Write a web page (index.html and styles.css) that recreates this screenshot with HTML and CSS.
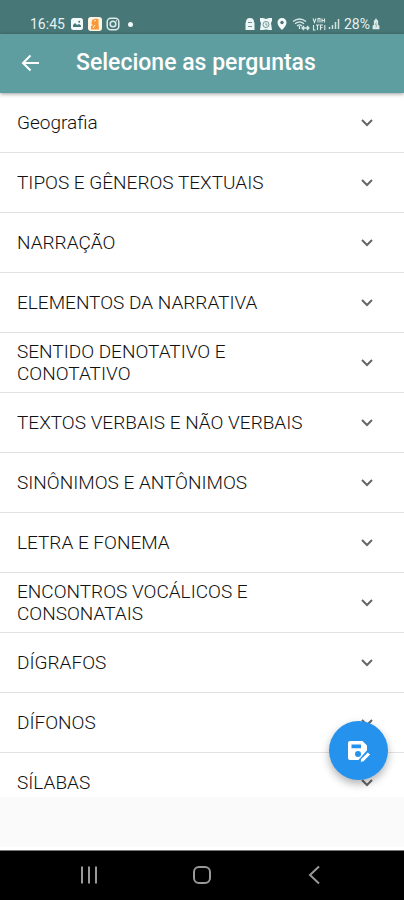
FILE: index.html
```html
<!DOCTYPE html>
<html lang="pt-BR">
<head>
<meta charset="utf-8">
<meta name="viewport" content="width=device-width, initial-scale=1">
<title>Selecione as perguntas</title>
<link rel="stylesheet" href="styles.css">
</head>
<body>
<div class="screen">
  <div class="status">
    <div class="status-group">
      <span class="clock">16:45</span>
      <svg class="glyph" viewBox="0 0 14 14"><rect x="1" y="1" width="12" height="12" rx="2.5" fill="#f2fafa"/><path d="M3 10V8l2-2 2 2 2-1 2 1.500V10z" fill="#477776"/><circle cx="9.200" cy="4.700" r="1" fill="#477776"/></svg>
      <svg class="glyph" viewBox="0 0 14 14"><rect width="14" height="14" rx="3" fill="#fff4e6"/><path d="M4 3l4-1.500 2.500 1V7l.5 5.500H3V9l2-1-1.500-1z" fill="#f79a35"/><path d="M6 4l2-.5M5 11l2-3" stroke="#fff4e6" fill="none"/></svg>
      <svg class="glyph" viewBox="0 0 14 14" fill="none" stroke="#dcebea" stroke-width="1.500"><rect x="1.200" y="1.200" width="11.600" height="11.600" rx="3.500"/><circle cx="7" cy="7" r="2.800"/><path d="M10 3.700h.8"/></svg>
      <span class="dot"></span>
    </div>
    <div class="status-group status-right">
      <svg class="glyph-small" viewBox="0 0 12 14"><path d="M2 5a4 4 0 0 1 8 0l.5 1v7h-9V6z" fill="#eef7f7"/><path d="M4 5.500h4M4 9.500h4" stroke="#6b9493"/></svg>
      <svg class="glyph-small" viewBox="0 0 12 14"><path d="M0 1h3l3 1 3-1h3v3l-1 2 1 7H9l-3-.5L3 13H0l1-7-1-2z" fill="#eef7f7"/><circle cx="6" cy="7.500" r="3" fill="none" stroke="#6b9493"/><path d="M6 6v2h1.500" fill="none" stroke="#6b9493"/></svg>
      <svg class="glyph-small" viewBox="0 0 12 14"><path d="M6 1a4.500 4.500 0 0 0-4.500 4.500C1.500 9 6 13 6 13s4.500-4 4.500-7.500A4.500 4.500 0 0 0 6 1z" fill="#f4fbfb"/><circle cx="6" cy="5.500" r="1.700" fill="#477776"/></svg>
      <svg class="glyph-wifi" viewBox="0 0 18 14" fill="none" stroke="#dcebea" stroke-width="1.300"><path d="M1 4.500q6.500-5 13 0M3 6.700q4.500-3.500 9 0M5 8.900q2.500-2 5 0"/><path d="M7.500 9v3M10 11h7M12 9l-2 2 2 2M15 9l2 2-2 2"/></svg>
      <svg class="glyph" viewBox="0 0 14 14" fill="none" stroke="#dcebea" stroke-width="1.100"><path d="M1 1.500l1.500 4 1.500-4M6 5.500v-4h2v4M10 1.500v4M12.500 1.500v4M10 3.500h2.500M1.500 8v5h2M5.500 8v5M4 8h3.500M8.500 13V8H11M8.500 10.500h2M12.800 8v5"/></svg>
      <svg class="glyph-small" viewBox="0 0 12 14" fill="none" stroke="#d0e2e1" stroke-width="1.500"><path d="M1.500 12v-2M4.500 12V8M7.500 12V5M10.500 12V2"/></svg>
      <span class="battery-level">28%</span>
      <svg class="glyph-battery" viewBox="0 0 8 14"><path d="M3 1h2v1.500h1.500V8L8 9v4H0V9l1.500-1V2.500H3z" fill="#dcebea"/><path d="M4.500 5L3 8h2l-1 3" stroke="#8aacab" fill="none"/></svg>
    </div>
  </div>

  <header class="appbar">
    <button class="back" type="button" aria-label="Voltar">
      <svg viewBox="0 0 18 18" fill="none" stroke="#fff" stroke-width="2"><path d="M17.500 9H1.500M9 1.500L1.500 9 9 16.500"/></svg>
    </button>
    <h1>Selecione as perguntas</h1>
  </header>

  <main class="content">
    <div class="list">
      <button class="row" type="button"><span>Geografia</span><svg class="chevron" viewBox="0 0 12 8"><path d="M1 1l5 5 5-5"/></svg></button>
      <button class="row" type="button"><span>TIPOS E GÊNEROS TEXTUAIS</span><svg class="chevron" viewBox="0 0 12 8"><path d="M1 1l5 5 5-5"/></svg></button>
      <button class="row" type="button"><span>NARRAÇÃO</span><svg class="chevron" viewBox="0 0 12 8"><path d="M1 1l5 5 5-5"/></svg></button>
      <button class="row" type="button"><span>ELEMENTOS DA NARRATIVA</span><svg class="chevron" viewBox="0 0 12 8"><path d="M1 1l5 5 5-5"/></svg></button>
      <button class="row" type="button"><span>SENTIDO DENOTATIVO E CONOTATIVO</span><svg class="chevron" viewBox="0 0 12 8"><path d="M1 1l5 5 5-5"/></svg></button>
      <button class="row" type="button"><span>TEXTOS VERBAIS E NÃO VERBAIS</span><svg class="chevron" viewBox="0 0 12 8"><path d="M1 1l5 5 5-5"/></svg></button>
      <button class="row" type="button"><span>SINÔNIMOS E ANTÔNIMOS</span><svg class="chevron" viewBox="0 0 12 8"><path d="M1 1l5 5 5-5"/></svg></button>
      <button class="row" type="button"><span>LETRA E FONEMA</span><svg class="chevron" viewBox="0 0 12 8"><path d="M1 1l5 5 5-5"/></svg></button>
      <button class="row" type="button"><span>ENCONTROS VOCÁLICOS E CONSONATAIS</span><svg class="chevron" viewBox="0 0 12 8"><path d="M1 1l5 5 5-5"/></svg></button>
      <button class="row" type="button"><span>DÍGRAFOS</span><svg class="chevron" viewBox="0 0 12 8"><path d="M1 1l5 5 5-5"/></svg></button>
      <button class="row" type="button"><span>DÍFONOS</span><svg class="chevron" viewBox="0 0 12 8"><path d="M1 1l5 5 5-5"/></svg></button>
      <button class="row" type="button"><span>SÍLABAS</span><svg class="chevron" viewBox="0 0 12 8"><path d="M1 1l5 5 5-5"/></svg></button>
    </div>
    <button class="fab" type="button" aria-label="Salvar seleção">
      <svg viewBox="0 0 24 24"><path fill="#fff" fill-rule="evenodd" d="M3 2h12.500L20 6.500v4.800L11.500 21H3a2 2 0 0 1-2-2V4a2 2 0 0 1 2-2zM4.500 5.500v3.800h9.500V5.500zM11 12a3 3 0 1 0 0 6 3 3 0 0 0 0-6z"/><path d="M13.200 23.200l.3-3.100 7.300-7.100 2.700 2.700-7.200 7.300z" fill="#fff" stroke="#2593ee" stroke-width="1"/></svg>
    </button>
  </main>

  <div class="banner"></div>

  <nav class="navbar">
    <button type="button" aria-label="Recentes"><svg viewBox="0 0 20 20" fill="none" stroke="#999" stroke-width="2"><path d="M3 1.500v17M10 1.500v17M17 1.500v17"/></svg></button>
    <button type="button" aria-label="Início"><svg viewBox="0 0 20 20" fill="none" stroke="#999" stroke-width="2"><rect x="2" y="2" width="16" height="16" rx="5"/></svg></button>
    <button type="button" aria-label="Voltar"><svg viewBox="0 0 20 20" fill="none" stroke="#999" stroke-width="2"><path d="M14 1.500L5 10l9 8.500"/></svg></button>
  </nav>
</div>
</body>
</html>
```
FILE: styles.css
```css
* {
  box-sizing: border-box;
}

body {
  margin: 0;
  font-family: Roboto, "Liberation Sans", sans-serif;
  background: #fafafa;
}

button {
  margin: 0;
  padding: 0;
  border: 0;
  background: none;
  font: inherit;
  color: inherit;
}

svg {
  display: block;
  flex: none;
}

.screen {
  display: flex;
  flex-direction: column;
  height: 100vh;
}

.status {
  display: flex;
  justify-content: space-between;
  flex: none;
  height: 34px;
  padding: 14px 24px 0 30px;
  background: #477776;
  color: #e6f1f1;
  font-size: 14px;
  line-height: 20px;
}

.status-group {
  display: flex;
  align-items: center;
  gap: 4px;
}

.status-right {
  gap: 2px;
}

.clock {
  margin-right: 1px;
}

.glyph {
  width: 14px;
  height: 14px;
}

.glyph-small {
  width: 12px;
  height: 14px;
}

.status-right .glyph-small {
  margin-right: 2px;
}

.glyph-wifi {
  width: 18px;
  height: 14px;
}

.glyph-battery {
  width: 8px;
  height: 12px;
}

.dot {
  width: 5px;
  height: 5px;
  margin-left: 4px;
  border-radius: 50%;
  background: #f2fafa;
}

.appbar {
  position: relative;
  z-index: 1;
  display: flex;
  align-items: center;
  flex: none;
  gap: 36px;
  height: 59px;
  padding: 0 21px 2px;
  background: #5f9ea0;
  color: #fff;
  box-shadow: 0 1px 4px rgba(0, 0, 0, 0.4);
}

.back svg {
  width: 19px;
  height: 18px;
}

.appbar h1 {
  margin: 0;
  font-size: 23px;
  font-weight: 500;
  line-height: 28px;
}

.content {
  position: relative;
  flex: 1;
  min-height: 0;
}

.list {
  height: 100%;
  overflow: hidden;
  background: #fff;
}

.row {
  display: flex;
  align-items: center;
  justify-content: space-between;
  width: 100%;
  min-height: 60px;
  padding: 0 31px 0 17px;
  border-bottom: 1px solid #e2e2e2;
  color: #111;
  font-size: 19px;
  font-weight: 300;
  line-height: 22px;
  text-align: left;
}

.row span {
  max-width: 290px;
}

.chevron {
  width: 12px;
  height: 8px;
  fill: none;
  stroke: #666;
  stroke-width: 2;
}

.fab {
  position: absolute;
  right: 16px;
  bottom: 17px;
  display: flex;
  align-items: center;
  justify-content: center;
  width: 59px;
  height: 59px;
  border-radius: 50%;
  background: #2593ee;
  box-shadow: 0 4px 8px rgba(0, 0, 0, 0.3);
}

.fab svg {
  width: 24px;
  height: 24px;
}

.banner {
  flex: none;
  height: 53px;
  border-bottom: 3px solid #fff;
  background: #fafafa;
}

.navbar {
  display: flex;
  justify-content: space-between;
  align-items: center;
  flex: none;
  height: 50px;
  padding: 0 79px 2px;
  border-top: 1px solid #777;
  background: #000;
}

.navbar svg {
  width: 20px;
  height: 20px;
}
```
